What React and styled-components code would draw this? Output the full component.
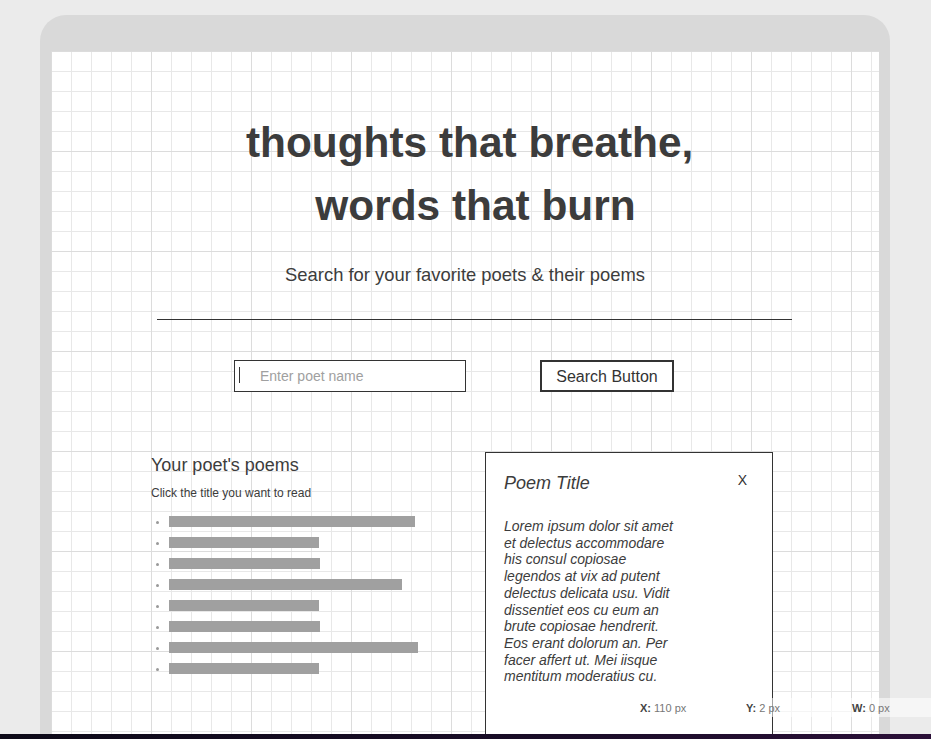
import styled, { createGlobalStyle } from 'styled-components'

const GlobalStyle = createGlobalStyle`
  html, body {
    margin: 0;
    padding: 0;
  }
  body {
    background: #ebebeb;
    font-family: "Liberation Sans", Arial, sans-serif;
    color: #3c3c3c;
    overflow: hidden;
  }
`

const poems = [246, 150, 151, 233, 150, 151, 249, 150]

const coords = [
  { label: 'X:', value: '110 px' },
  { label: 'Y:', value: '2 px' },
  { label: 'W:', value: '0 px' },
]

function App() {
  return (
    <Page>
      <GlobalStyle />
      <Device>
        <Screen>
          <Hero>
            <Title>
              thoughts that breathe,{'\u00a0'}
              <br />
              words that burn
            </Title>
            <Subtitle>Search for your favorite poets &amp; their poems</Subtitle>
            <Rule />
          </Hero>

          <SearchRow>
            <SearchField>
              <Caret />
              <Placeholder>Enter poet name</Placeholder>
            </SearchField>
            <SearchButton type="button">Search Button</SearchButton>
          </SearchRow>

          <Results>
            <PoemsColumn>
              <ColumnTitle>Your poet's poems</ColumnTitle>
              <Hint>Click the title you want to read</Hint>
              <PoemList>
                {poems.map((w, i) => (
                  <PoemItem key={i}>
                    <Bullet />
                    <PoemBar $width={w} />
                  </PoemItem>
                ))}
              </PoemList>
            </PoemsColumn>

            <PoemCard>
              <CardHeader>
                <CardTitle>Poem Title</CardTitle>
                <Close>X</Close>
              </CardHeader>
              <PoemText>
                Lorem ipsum dolor sit amet et delectus accommodare his consul copiosae
                legendos at vix ad putent delectus delicata usu. Vidit dissentiet eos cu
                eum an brute copiosae hendrerit. Eos erant dolorum an. Per facer affert
                ut. Mei iisque mentitum moderatius cu.
              </PoemText>
            </PoemCard>
          </Results>
        </Screen>
      </Device>

      <CoordBar>
        {coords.map((c) => (
          <Coord key={c.label}>
            <b>{c.label}</b> {c.value}
          </Coord>
        ))}
      </CoordBar>
      <Taskbar />
    </Page>
  )
}

const Page = styled.div`
  position: relative;
  height: 739px;
  overflow: hidden;
  padding: 15px 0 0 40px;
  box-sizing: border-box;
`

const Device = styled.div`
  width: 850px;
  height: 724px;
  box-sizing: border-box;
  padding: 36px 11px 0;
  background: #d9d9d9;
  border-radius: 26px 26px 0 0;
`

const Screen = styled.div`
  height: 100%;
  background-color: #fff;
  background-image:
    linear-gradient(to right, transparent 99px, #dcdcdc 99px),
    linear-gradient(to bottom, transparent 99px, #dcdcdc 99px),
    linear-gradient(to right, transparent 19px, #e8e8e8 19px),
    linear-gradient(to bottom, transparent 19px, #e8e8e8 19px);
  background-size: 100px 100px, 100px 100px, 20px 20px, 20px 20px;
  background-position: 1px 1px;
  overflow: hidden;
`

const Hero = styled.header`
  padding-top: 60px;
`

const Title = styled.h1`
  margin: 0 0 0 21px;
  font-size: 42.4px;
  line-height: 63px;
  font-weight: bold;
  text-align: center;
  color: #3c3c3c;
`

const Subtitle = styled.p`
  margin: 27px 0 0;
  font-size: 18.4px;
  text-align: center;
`

const Rule = styled.div`
  height: 1px;
  margin: 33px 87px 0 106px;
  background: #333;
`

const SearchRow = styled.div`
  display: flex;
  gap: 74px;
  margin-top: 40px;
  padding-left: 183px;
`

const SearchField = styled.div`
  display: flex;
  align-items: center;
  width: 232px;
  height: 32px;
  box-sizing: border-box;
  padding: 0 0 1px 4px;
  border: 1px solid #333;
  background: #fff;
`

const Caret = styled.span`
  width: 1px;
  height: 16px;
  margin-top: -2px;
  background: #333;
`

const Placeholder = styled.span`
  margin-left: 20px;
  font-size: 14px;
  color: #a0a0a0;
`

const SearchButton = styled.button`
  width: 134px;
  height: 32px;
  border: 2px solid #333;
  background: #fff;
  font-family: inherit;
  font-size: 16px;
  color: #333;
  padding: 2px 0 0;
`

const Results = styled.section`
  display: grid;
  grid-template-columns: 334px 288px;
  margin-top: 60px;
  padding-left: 100px;
`

const PoemsColumn = styled.div`
  padding-top: 3px;
`

const ColumnTitle = styled.h2`
  margin: 0;
  font-size: 18px;
  font-weight: normal;
`

const Hint = styled.p`
  margin: 10px 0 0;
  font-size: 12px;
`

const PoemList = styled.ul`
  list-style: none;
  margin: 11px 0 0;
  padding: 0;
`

const PoemItem = styled.li`
  display: flex;
  align-items: center;
  height: 21px;
`

const Bullet = styled.span`
  width: 3px;
  height: 3px;
  margin: 1px 10px 0 5px;
  border-radius: 50%;
  background: #999;
`

const PoemBar = styled.span`
  width: ${({ $width }) => $width}px;
  height: 11px;
  background: #a0a0a0;
`

const PoemCard = styled.article`
  height: 300px;
  box-sizing: border-box;
  padding: 20px 25px 0 18px;
  border: 1px solid #333;
  background: #fff;
`

const CardHeader = styled.div`
  display: flex;
  justify-content: space-between;
  align-items: flex-start;
`

const CardTitle = styled.h3`
  margin: 0;
  font-size: 18px;
  font-weight: normal;
  font-style: italic;
`

const Close = styled.span`
  margin-top: -1px;
  font-size: 14px;
  color: #333;
`

const PoemText = styled.p`
  width: 180px;
  margin: 24px 0 0;
  font-size: 14px;
  line-height: 16.7px;
  font-style: italic;
`

const CoordBar = styled.div`
  position: absolute;
  left: 620px;
  right: 0;
  top: 698px;
  height: 19px;
  display: flex;
  align-items: center;
  padding-left: 20px;
  background: rgba(255, 255, 255, 0.55);
`

const Coord = styled.span`
  flex: 0 0 106px;
  font-size: 11px;
  color: #777;
  white-space: nowrap;

  b {
    color: #444;
  }
`

const Taskbar = styled.div`
  position: absolute;
  left: 0;
  right: 0;
  bottom: 0;
  height: 5px;
  background: linear-gradient(90deg, #0d0a18, #1a0d28 60%, #2b1038);
`

export default App
